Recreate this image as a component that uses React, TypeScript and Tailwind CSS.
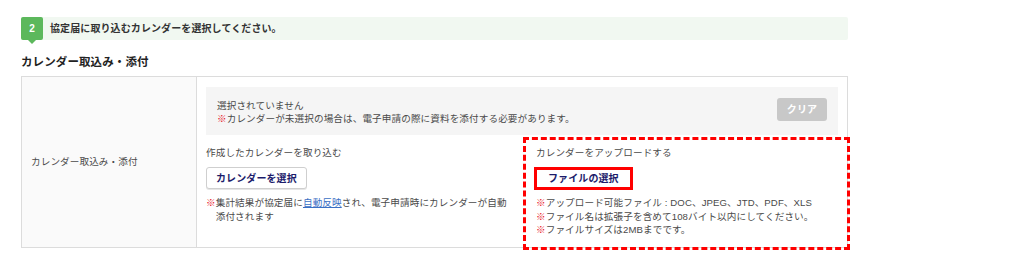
import * as React from "react";

// Red "※" mark used in front of notes
function Kome() {
  return <span className="text-[#e8141e]">※</span>;
}

function Note({ children }: { children: React.ReactNode }) {
  return (
    <div className="flex leading-[13.5px]">
      <Kome />
      <p>{children}</p>
    </div>
  );
}

export default function App() {
  return (
    <div className="min-h-[269px] w-[1024px] bg-white pt-[17px] font-['Liberation_Sans','Noto_Sans_CJK_JP',sans-serif] text-[9.6px] tracking-[0.1px] text-[#4a4a4a]">
      <div className="ml-[21px] w-[827px]">
        {/* Step banner */}
        <div className="flex h-[23px] items-center rounded-[2px] bg-[#f1f8f1]">
          <div className="relative flex h-[23px] w-[22px] items-center justify-center rounded-[2px] bg-[#5cb85c] text-[10px] font-bold text-white">
            2
            <span className="absolute left-[7px] top-[23px] h-0 w-0 border-x-[4px] border-t-[4px] border-x-transparent border-t-[#5cb85c]" />
          </div>
          <p className="ml-[7px] text-[10px] font-bold text-[#333]">
            協定届に取り込むカレンダーを選択してください。
          </p>
        </div>

        {/* Section heading */}
        <h2 className="mt-[14px] mb-[6px] text-[11.5px] font-bold leading-[16px] text-[#222]">
          カレンダー取込み・添付
        </h2>

        {/* Table */}
        <div className="flex h-[172px] border border-[#dcdcdc]">
          <div className="flex w-[175px] shrink-0 items-center border-r border-[#dcdcdc] bg-[#fafafa] pl-[9px]">
            カレンダー取込み・添付
          </div>
          <div className="flex-1 px-[9px] pt-[10px]">
            {/* Current selection */}
            <div className="flex h-[48px] items-center justify-between bg-[#f5f5f5] pl-[11px] pr-[11px]">
              <div className="pt-px leading-[13px]">
                <p>選択されていません</p>
                <p>
                  <Kome />
                  カレンダーが未選択の場合は、電子申請の際に資料を添付する必要があります。
                </p>
              </div>
              <button className="mt-[-3px] h-[23px] w-[50px] rounded-[3px] bg-[#c8c8c8] text-[10px] font-bold text-white">
                クリア
              </button>
            </div>

            <div className="mt-[11px] grid grid-cols-2">
              {/* Import from created calendar */}
              <div>
                <p className="leading-[13px]">作成したカレンダーを取り込む</p>
                <button className="mt-[8px] h-[22px] rounded-[3px] border border-[#cfcfcf] bg-white px-[9px] text-[10px] font-bold text-[#1c1c6b] shadow-[0_1px_0_#e6e6e6]">
                  カレンダーを選択
                </button>
                <div className="mt-[7px]">
                  <Note>
                    集計結果が協定届に<span className="text-[#3a6fc4] underline">自動反映</span>され、電子申請時にカレンダーが自動
                    <br />
                    添付されます
                  </Note>
                </div>
              </div>

              {/* Upload */}
              <div className="relative pl-[14px]">
                <p className="leading-[13px]">カレンダーをアップロードする</p>
                <button className="mt-[8px] ml-[-2px] h-[23px] border-[3px] border-[#f00] bg-white px-[11px] text-[10px] font-bold text-[#1c1c6b]">
                  ファイルの選択
                </button>
                <div className="mt-[6px]">
                  <Note>アップロード可能ファイル : DOC、JPEG、JTD、PDF、XLS</Note>
                  <Note>ファイル名は拡張子を含めて108バイト以内にしてください。</Note>
                  <Note>ファイルサイズは2MBまでです。</Note>
                </div>
                {/* Highlight annotation */}
                <div className="pointer-events-none absolute -top-[9px] left-px -right-[12px] -bottom-[13px] border-[3px] border-dashed border-[#f00]" />
              </div>
            </div>
          </div>
        </div>
      </div>
    </div>
  );
}
